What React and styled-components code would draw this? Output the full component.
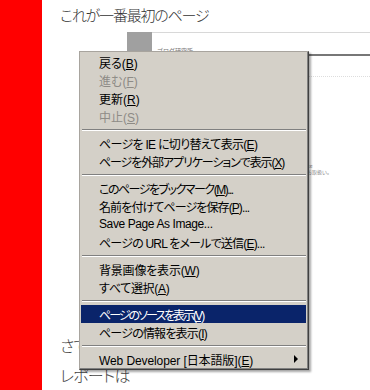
import React from 'react';
import styled, { createGlobalStyle } from 'styled-components';

const GlobalStyle = createGlobalStyle`
  html, body {
    margin: 0;
    padding: 0;
    background: #ffffff;
  }
  body {
    font-family: "Liberation Sans", "Noto Sans CJK JP", sans-serif;
  }
`;

const menuItems = [
  { label: '戻る', key: 'B' },
  { label: '進む', key: 'F', disabled: true },
  { label: '更新', key: 'R' },
  { label: '中止', key: 'S', disabled: true },
  { sep: true },
  { label: 'ページを IE に切り替えて表示', key: 'E', ls: -0.7 },
  { label: 'ページを外部アプリケーションで表示', key: 'X', ls: -1.1 },
  { sep: true },
  { label: 'このページをブックマーク', key: 'M', dots: true, ls: -1.5 },
  { label: '名前を付けてページを保存', key: 'P', dots: true, ls: -0.9 },
  { label: 'Save Page As Image...', ls: -0.4 },
  { label: 'ページの URL をメールで送信', key: 'E', dots: true, ls: -0.8 },
  { sep: true },
  { label: '背景画像を表示', key: 'W', ls: -0.2 },
  { label: 'すべて選択', key: 'A', ls: -0.3 },
  { sep: true },
  { label: 'ページのソースを表示', key: 'V', active: true, ls: -2 },
  { label: 'ページの情報を表示', key: 'I', ls: -0.8 },
  { sep: true },
  { label: 'Web Developer [日本語版]', key: 'E', submenu: true, ls: -0.1 }
];

function App() {
  return (
    <>
      <GlobalStyle />
      <Page>
        <SideBar />
        <Content>
          <Title>これが一番最初のページ</Title>
          <Shot>
            <ShotSide />
            <ShotMain>
              <ShotHeader>
                <ShotLogo>ブログ研究所</ShotLogo>
              </ShotHeader>
              <ShotRule />
              <ShotDots />
              <ShotNote>ke<br />お取扱い。</ShotNote>
            </ShotMain>
          </Shot>
          <Para>さて</Para>
          <Para>レポートは</Para>
        </Content>

        <Menu>
          {menuItems.map((item, i) =>
            item.sep ? (
              <Separator key={i} />
            ) : (
              <Item
                key={i}
                $disabled={item.disabled}
                $active={item.active}
                $ls={item.ls || 0}
              >
                <span>
                  {item.label}
                  {item.key && (
                    <>
                      (<u>{item.key}</u>)
                    </>
                  )}
                  {item.dots && '...'}
                </span>
                {item.submenu && <Arrow />}
              </Item>
            )
          )}
        </Menu>
      </Page>
    </>
  );
}

const Page = styled.div`
  position: relative;
  display: flex;
  width: 370px;
  height: 390px;
  overflow: hidden;
  background: #fff;
`;

const SideBar = styled.div`
  width: 42px;
  flex-shrink: 0;
  background: #ff0000;
`;

const Content = styled.div`
  flex: 1;
  display: flex;
  flex-direction: column;
  padding-left: 18px;
`;

const Title = styled.h1`
  margin: 4px 0 0;
  font-family: "Noto Sans CJK JP", sans-serif;
  font-weight: 300;
  font-size: 15px;
  line-height: 22px;
  color: #333;
  font-feature-settings: "palt";
  letter-spacing: -1.2px;
`;

const Shot = styled.div`
  display: flex;
  margin: 6px 0 0 67px;
  height: 300px;
`;

const ShotSide = styled.div`
  width: 25px;
  height: 20px;
  background: #a0a0a0;
`;

const ShotMain = styled.div`
  flex: 1;
  display: flex;
  flex-direction: column;
  border-top: 1px solid #d8d8d8;
`;

const ShotHeader = styled.div`
  padding: 6px 0 0 5px;
  height: 15px;
`;

const ShotLogo = styled.span`
  font-family: "Noto Sans CJK JP", sans-serif;
  font-size: 6px;
  color: #777;
`;

const ShotRule = styled.div`
  height: 2px;
  background: #777;
`;

const ShotDots = styled.div`
  margin-top: 20px;
  border-top: 1px dotted #ddd;
`;

const ShotNote = styled.div`
  margin: 86px 0 0 155px;
  font-family: "Noto Sans CJK JP", sans-serif;
  font-size: 5px;
  line-height: 6px;
  color: #888;
`;

const Para = styled.p`
  margin: 0;
  font-family: "Noto Sans CJK JP", sans-serif;
  font-weight: 300;
  font-size: 16px;
  line-height: 30px;
  color: #444;
  font-feature-settings: "palt";
  letter-spacing: -0.8px;
  &:first-of-type {
    margin-top: -2px;
  }
`;

const Menu = styled.div`
  position: absolute;
  left: 79px;
  top: 51px;
  width: 226px;
  padding: 1px;
  box-sizing: content-box;
  background: #d4d0c8;
  border-top: 1px solid #a8a49e;
  border-left: 1px solid #a8a49e;
  border-right: 1px solid #404040;
  border-bottom: 1px solid #404040;
  box-shadow: inset -1px -1px 0 #808080, 2px 2px 2px rgba(0, 0, 0, 0.35);
  display: flex;
  flex-direction: column;
  font-family: "Liberation Sans", "Noto Sans CJK JP", sans-serif;
  font-size: 12px;
  font-feature-settings: "palt";
`;

const Item = styled.div`
  display: flex;
  align-items: center;
  justify-content: space-between;
  height: 18px;
  padding: 0 8px 0 18px;
  margin-right: 1px;
  white-space: nowrap;
  letter-spacing: ${p => p.$ls}px;
  color: ${p => (p.$active ? '#ffffff' : p.$disabled ? '#8e8b86' : '#000000')};
  background: ${p => (p.$active ? '#0a246a' : 'transparent')};
  u {
    text-decoration: underline;
    text-underline-offset: 1px;
  }
`;

const Separator = styled.div`
  height: 9px;
  display: flex;
  align-items: center;
  padding: 0 1px;
  &::before {
    content: '';
    flex: 1;
    height: 0;
    border-top: 1px solid #808080;
    border-bottom: 1px solid #ffffff;
  }
`;

const Arrow = styled.span`
  width: 0;
  height: 0;
  border-top: 4px solid transparent;
  border-bottom: 4px solid transparent;
  border-left: 4px solid #000;
`;

export default App;
